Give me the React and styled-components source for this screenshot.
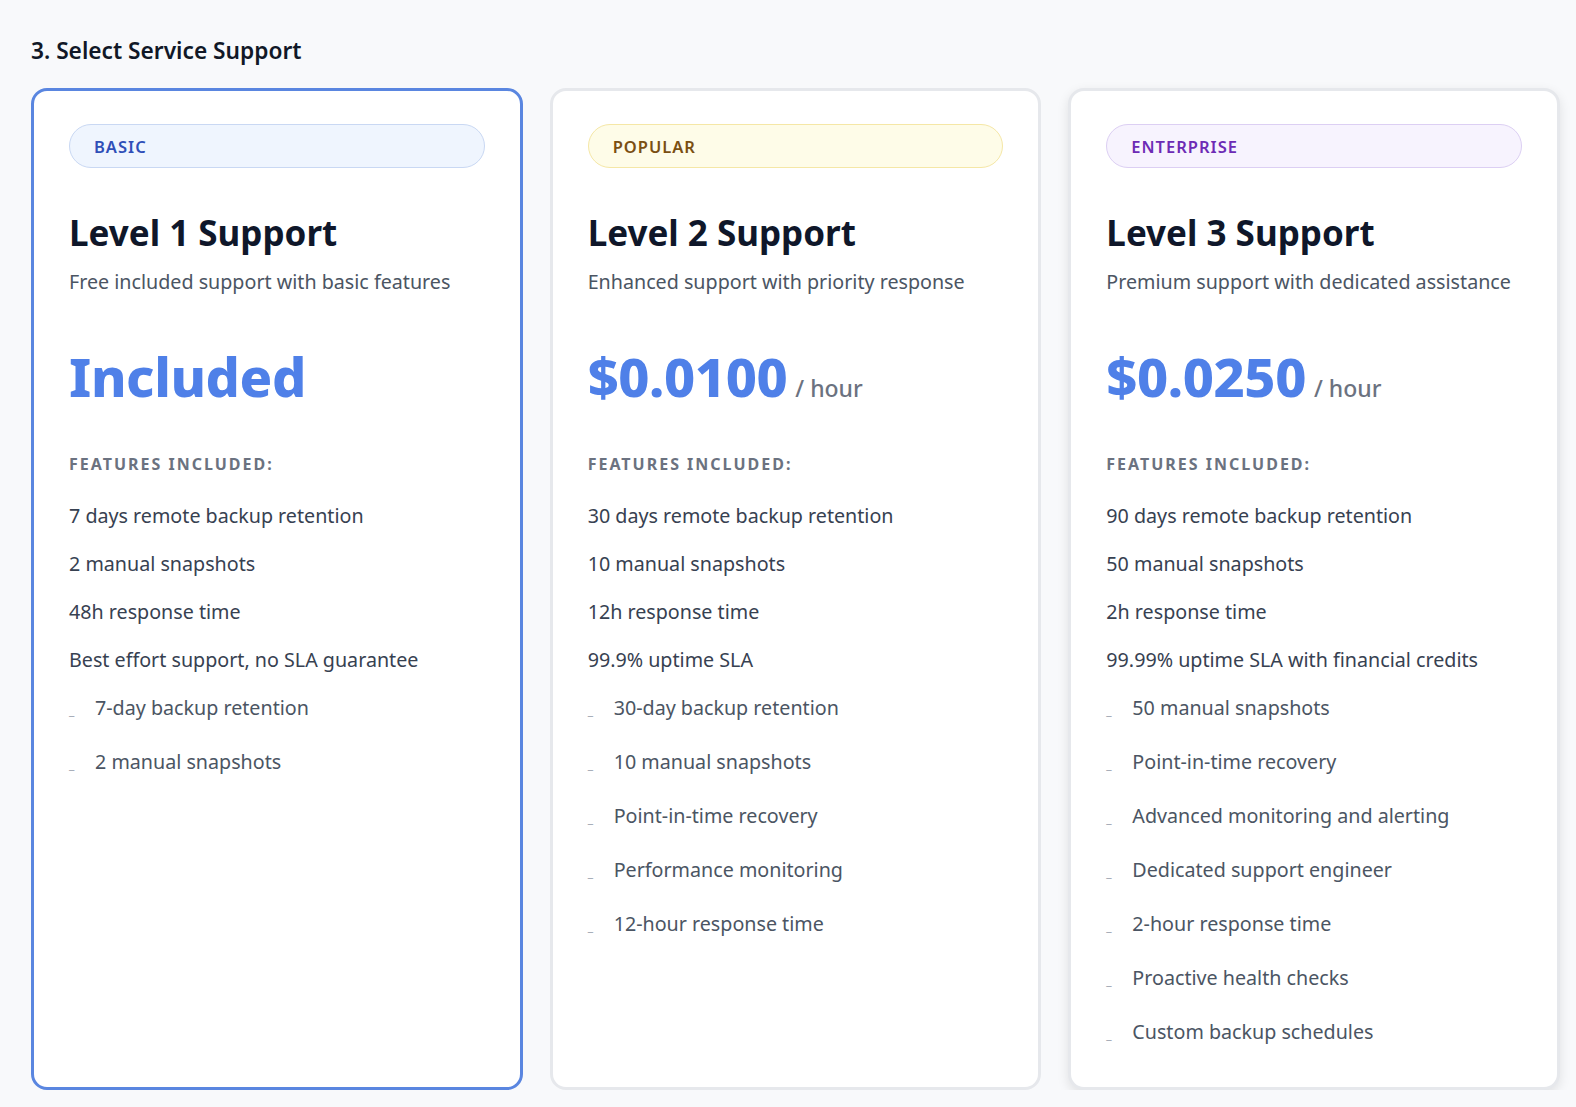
import React from "react";
import styled, { createGlobalStyle } from "styled-components";

const GlobalStyle = createGlobalStyle`
  html, body {
    margin: 0;
    padding: 0;
    overflow: hidden;
    background: #f8f9fb;
    font-family: "Noto Sans", "Open Sans", sans-serif;
    color: #111827;
  }
`;

const tiers = [
  {
    badge: "BASIC",
    tone: "blue",
    title: "Level 1 Support",
    description: "Free included support with basic features",
    price: "Included",
    unit: null,
    selected: true,
    features: [
      "7 days remote backup retention",
      "2 manual snapshots",
      "48h response time",
      "Best effort support, no SLA guarantee",
    ],
    extras: ["7-day backup retention", "2 manual snapshots"],
  },
  {
    badge: "POPULAR",
    tone: "yellow",
    title: "Level 2 Support",
    description: "Enhanced support with priority response",
    price: "$0.0100",
    unit: "/ hour",
    features: [
      "30 days remote backup retention",
      "10 manual snapshots",
      "12h response time",
      "99.9% uptime SLA",
    ],
    extras: [
      "30-day backup retention",
      "10 manual snapshots",
      "Point-in-time recovery",
      "Performance monitoring",
      "12-hour response time",
    ],
  },
  {
    badge: "ENTERPRISE",
    tone: "purple",
    title: "Level 3 Support",
    description: "Premium support with dedicated assistance",
    price: "$0.0250",
    unit: "/ hour",
    hovered: true,
    features: [
      "90 days remote backup retention",
      "50 manual snapshots",
      "2h response time",
      "99.99% uptime SLA with financial credits",
    ],
    extras: [
      "50 manual snapshots",
      "Point-in-time recovery",
      "Advanced monitoring and alerting",
      "Dedicated support engineer",
      "2-hour response time",
      "Proactive health checks",
      "Custom backup schedules",
    ],
  },
];

const badgeTones = {
  blue: { bg: "#eff5fe", border: "#c9d8f3", color: "#2f4fb8" },
  yellow: { bg: "#fefce8", border: "#f5e7a6", color: "#7a4f12" },
  purple: { bg: "#f7f3fe", border: "#dccff3", color: "#6d2bb5" },
};

const Page = styled.main`
  padding: 36px 16px 0 31px;
`;

const Heading = styled.h2`
  margin: 0 0 22px;
  font-size: 22.7px;
  font-weight: 600;
  color: #111827;
  line-height: 30px;
`;

const Grid = styled.div`
  display: grid;
  grid-template-columns: repeat(3, minmax(0, 1fr));
  gap: 27px;
`;

const Card = styled.section`
  background: #fff;
  border: 3px solid ${(p) => (p.$selected ? "#5a86e0" : "#e6e8ec")};
  border-radius: 16px;
  padding: 33px 35px 0;
  height: 1002px;
  box-sizing: border-box;
  box-shadow: ${(p) =>
    p.$hovered ? "0 4px 12px rgba(0, 0, 0, 0.1)" : "none"};
`;

const Badge = styled.div`
  height: 44px;
  box-sizing: border-box;
  display: flex;
  align-items: center;
  padding: 0 24px;
  border-radius: 22px;
  border: 1px solid ${(p) => badgeTones[p.$tone].border};
  background: ${(p) => badgeTones[p.$tone].bg};
  color: ${(p) => badgeTones[p.$tone].color};
  font-size: 16.5px;
  font-weight: 600;
  letter-spacing: 1px;
`;

const Title = styled.h3`
  margin: 42px 0 0;
  font-size: 35px;
  font-weight: 700;
  line-height: 46px;
  color: #0f172a;
`;

const Description = styled.p`
  margin: 12px 0 0;
  font-size: 19.7px;
  line-height: 28px;
  color: #4b5563;
`;

const PriceRow = styled.div`
  display: flex;
  align-items: baseline;
  gap: 8px;
  margin-top: 50px;
  height: 68px;
`;

const Price = styled.span`
  font-size: 54px;
  font-weight: 800;
  color: #4f80e8;
  line-height: 60px;
  letter-spacing: -0.4px;
`;

const Unit = styled.span`
  font-size: 23px;
  color: #6b7280;
  font-weight: 500;
`;

const FeaturesLabel = styled.div`
  margin-top: 39px;
  font-size: 16px;
  font-weight: 700;
  letter-spacing: 2px;
  color: #6b7280;
`;

const FeatureList = styled.ul`
  list-style: none;
  margin: 27px 0 0;
  padding: 0;
`;

const Feature = styled.li`
  font-size: 19.7px;
  line-height: 28px;
  height: 28px;
  color: #374151;
  margin-bottom: 20px;
`;

const Extra = styled.li`
  display: flex;
  align-items: baseline;
  font-size: 19.7px;
  line-height: 28px;
  height: 28px;
  color: #4b5563;
  margin-bottom: 26px;
`;

const Dash = styled.span`
  width: 26px;
  flex: none;
  font-size: 12px;
  line-height: 28px;
  color: #9ca3af;
`;

function TierCard({ tier }) {
  return (
    <Card $selected={tier.selected} $hovered={tier.hovered}>
      <Badge $tone={tier.tone}>{tier.badge}</Badge>
      <Title>{tier.title}</Title>
      <Description>{tier.description}</Description>
      <PriceRow>
        <Price>{tier.price}</Price>
        {tier.unit && <Unit>{tier.unit}</Unit>}
      </PriceRow>
      <FeaturesLabel>FEATURES INCLUDED:</FeaturesLabel>
      <FeatureList>
        {tier.features.map((f) => (
          <Feature key={f}>{f}</Feature>
        ))}
        {tier.extras.map((f) => (
          <Extra key={"x" + f}>
            <Dash>_</Dash>
            {f}
          </Extra>
        ))}
      </FeatureList>
    </Card>
  );
}

export default function App() {
  return (
    <>
      <GlobalStyle />
      <Page>
        <Heading>3. Select Service Support</Heading>
        <Grid>
          {tiers.map((t) => (
            <TierCard key={t.badge} tier={t} />
          ))}
        </Grid>
      </Page>
    </>
  );
}
